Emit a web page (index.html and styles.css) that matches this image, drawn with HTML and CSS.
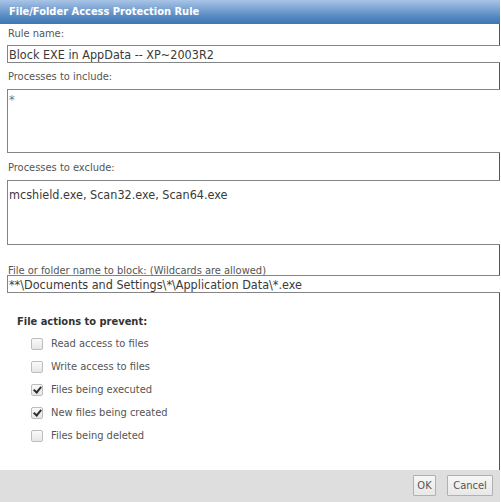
FILE: index.html
```html
<!DOCTYPE html>
<html>
<head>
<meta charset="utf-8">
<link rel="stylesheet" href="styles.css">
</head>
<body>
<div class="dialog">
  <div class="titlebar">File/Folder Access Protection Rule</div>
  <div class="label-row r1">Rule name:</div>
  <div class="field line f1">Block EXE in AppData -- XP~2003R2</div>
  <div class="label-row r2">Processes to include:</div>
  <div class="field area a1">*</div>
  <div class="label-row r3">Processes to exclude:</div>
  <div class="field area a2">mcshield.exe, Scan32.exe, Scan64.exe</div>
  <div class="label-row r4">File or folder name to block: (Wildcards are allowed)</div>
  <div class="field line f2">**\Documents and Settings\*\Application Data\*.exe</div>
  <div class="actions">
    <div class="actions-title">File actions to prevent:</div>
    <ul class="checks">
      <li><span class="cb"></span>Read access to files</li>
      <li><span class="cb"></span>Write access to files</li>
      <li><span class="cb checked"></span>Files being executed</li>
      <li><span class="cb checked"></span>New files being created</li>
      <li><span class="cb"></span>Files being deleted</li>
    </ul>
  </div>
  <div class="footer">
    <button class="btn btn-ok">OK</button>
    <button class="btn btn-cancel">Cancel</button>
  </div>
</div>
</body>
</html>
```
FILE: styles.css
```css
html, body {
  margin: 0;
  padding: 0;
  background: #ffffff;
}
.dialog {
  width: 500px;
  font-family: "DejaVu Sans Condensed", "DejaVu Sans", sans-serif;
  font-size: 11px;
  color: #555555;
}
.titlebar {
  height: 24px;
  box-sizing: border-box;
  padding: 5px 0 0 9px;
  font-weight: bold;
  font-size: 11px;
  line-height: 14px;
  color: #ffffff;
  background: linear-gradient(#a9c4e6 0%, #7ea6d4 35%, #4f85bf 75%, #3f77b2 100%);
}
.label-row {
  box-sizing: border-box;
  border-right: 1px solid #555555;
  padding-left: 8px;
  line-height: 13px;
  white-space: nowrap;
}
.r1 { height: 21px; padding-top: 3px; }
.r2 { height: 26px; padding-top: 7px; }
.r3 { height: 27px; padding-top: 8px; }
.r4 { height: 30px; padding-top: 19px; }
.field {
  box-sizing: border-box;
  margin-left: 7px;
  border-top: 1px solid #848484;
  border-bottom: 1px solid #848484;
  border-left: 1px solid #848484;
  padding-left: 1px;
  color: #3a3a3a;
  font-size: 12.5px;
  line-height: 15px;
  white-space: nowrap;
  overflow: hidden;
}
.f1 { height: 18px; padding-top: 1px; }
.f2 { height: 18px; padding-top: 1px; }
.a1 { height: 64px; padding-top: 2px; color: #777777; }
.a2 { height: 65px; padding-top: 6px; }
.actions {
  box-sizing: border-box;
  height: 177px;
  border-right: 1px solid #555555;
  padding: 22px 0 0 17px;
}
.actions-title {
  font-weight: bold;
  color: #333333;
  line-height: 13px;
}
.checks {
  list-style: none;
  margin: 4px 0 0 14px;
  padding: 0;
}
.checks li {
  display: flex;
  align-items: center;
  height: 23px;
  color: #555555;
}
.cb {
  box-sizing: border-box;
  width: 12px;
  height: 12px;
  margin-right: 8px;
  border: 1px solid #bdbdbd;
  border-radius: 2px;
  background: linear-gradient(#fafafa, #e6e6e6);
  position: relative;
}
.cb.checked::after {
  content: "";
  position: absolute;
  left: 3px;
  top: 0px;
  width: 3px;
  height: 6px;
  border-right: 2px solid #2e2e2e;
  border-bottom: 2px solid #2e2e2e;
  transform: rotate(40deg);
}
.footer {
  box-sizing: border-box;
  height: 32px;
  background: #dedede;
  display: flex;
  justify-content: flex-end;
  align-items: flex-start;
  gap: 11px;
  padding: 5px 7px 0 0;
}
.btn {
  box-sizing: border-box;
  height: 21px;
  padding: 0;
  border: 1px solid #b0b0b0;
  border-radius: 1px;
  background: linear-gradient(#f6f6f6, #e8e8e8);
  font-family: "DejaVu Sans Condensed", "DejaVu Sans", sans-serif;
  font-size: 11px;
  color: #555555;
}
.btn-ok { width: 23px; }
.btn-cancel { width: 46px; }
```
